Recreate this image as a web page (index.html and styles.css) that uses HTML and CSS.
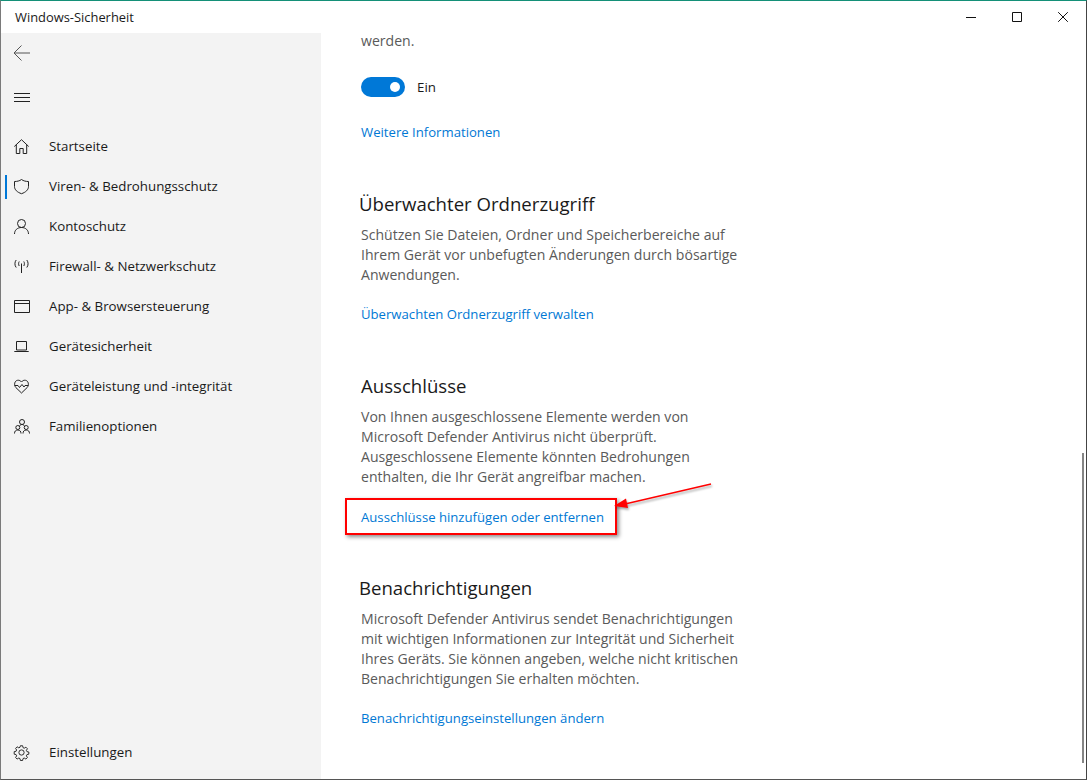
FILE: index.html
```html
<!DOCTYPE html>
<html lang="de">
<head>
<meta charset="utf-8">
<title>Windows-Sicherheit</title>
<link rel="stylesheet" href="styles.css">
</head>
<body>
<div class="window">
  <header class="titlebar">
    <span class="title">Windows-Sicherheit</span>
    <div class="controls">
      <svg class="ctl" viewBox="0 0 10 10"><path d="M0 5.500H10"/></svg>
      <svg class="ctl" viewBox="0 0 10 10"><path d="M.5.5h9v9H.5z"/></svg>
      <svg class="ctl" viewBox="0 0 10 10"><path d="M.2.2l9.600 9.600M9.800.2L.2 9.800"/></svg>
    </div>
  </header>
  <div class="main">
    <aside class="sidebar">
      <div class="tool">
        <svg class="ticon back" viewBox="0 0 18 18"><path d="M1 9h16M8.500 1.500L1 9l7.500 7.500"/></svg>
      </div>
      <div class="tool menu">
        <svg class="ticon" viewBox="0 0 18 18"><path d="M1 5.500h16M1 9.500h16M1 13.500h16"/></svg>
      </div>
      <nav class="nav">
        <a class="item">
          <svg class="icon" viewBox="0 0 15 15"><path d="M.3 7.500L7.500.7l7.200 6.800M2.300 5.800V14.500H5.800V9.500H9.200V14.500H12.700V5.800"/></svg>
          <span>Startseite</span>
        </a>
        <a class="item active">
          <svg class="icon" viewBox="0 0 15 15"><path d="M7.500.5C5.500 2 3 2.500.5 2.500V7.500c0 3.300 2.700 5.700 7 7.200 4.300-1.500 7-3.900 7-7.200V2.500C12 2.500 9.500 2 7.500.5z"/></svg>
          <span>Viren- &amp; Bedrohungsschutz</span>
        </a>
        <a class="item">
          <svg class="icon" viewBox="0 0 15 15"><circle cx="7.500" cy="4.500" r="4"/><path d="M.5 15c0-3.800 2.800-6.500 7-6.500s7 2.700 7 6.500"/></svg>
          <span>Kontoschutz</span>
        </a>
        <a class="item">
          <svg class="icon" viewBox="0 0 15 15"><path d="M7.500 4.500V14M5.200 2.500c-.8 1.300-.8 3 0 4.500M9.800 2.500c.8 1.300.8 3 0 4.500M2.200 1c-1.700 2-1.700 5.500 0 7.500M12.800 1c1.700 2 1.700 5.500 0 7.500"/></svg>
          <span>Firewall- &amp; Netzwerkschutz</span>
        </a>
        <a class="item">
          <svg class="icon icon-wide" viewBox="0 0 16 13"><path d="M.5.500h15v12H.5zM.5 3.500h15"/></svg>
          <span>App- &amp; Browsersteuerung</span>
        </a>
        <a class="item">
          <svg class="icon" viewBox="0 0 15 15"><path d="M2.500 2.500h10v8.500h-10zM.3 12.500h14.400"/></svg>
          <span>Gerätesicherheit</span>
        </a>
        <a class="item">
          <svg class="icon" viewBox="0 0 15 15"><path d="M1.800 8.500C-.3 6 .5 1.800 3.500 1.300c1.800-.3 3 .4 4 1.700 1-1.300 2.200-2 4-1.700 3 .5 3.800 4.700 1.700 7.200l-5.700 5.500zM.6 6.500h3.400l1.500 2 2.500-3 2 2.500 1-1.500h3.400"/></svg>
          <span>Geräteleistung und -integrität</span>
        </a>
        <a class="item">
          <svg class="icon icon-wide" viewBox="0 0 16 15"><circle cx="8" cy="3" r="2.500"/><circle cx="3.800" cy="8.500" r="2"/><circle cx="12.200" cy="8.500" r="2"/><path d="M.5 14.500c0-2 1-3.500 3.300-3.500S7 12.500 7 14.500M9 14.500c0-2 1-3.500 3.200-3.500s3.300 1.500 3.300 3.500M5.500 7c.5-1 1.500-1.500 2.500-1.500S10 6 10.500 7"/></svg>
          <span>Familienoptionen</span>
        </a>
      </nav>
      <a class="item settings">
        <svg class="icon" viewBox="0 0 16 16"><circle cx="8" cy="8" r="2.800"/><path d="M6.800.8h2.400l.4 2 1.300.6 1.800-1.100 1.600 1.700-1.100 1.700.6 1.400 2 .4v2.300l-2 .4-.6 1.400 1.100 1.700-1.600 1.700-1.800-1.100-1.300.6-.4 2H6.800l-.4-2-1.300-.6-1.800 1.100-1.600-1.700 1.100-1.700-.6-1.400-2-.4V7.100l2-.4.6-1.400-1.100-1.700 1.600-1.700 1.800 1.100 1.300-.6z"/></svg>
        <span>Einstellungen</span>
      </a>
    </aside>
    <main class="content">
      <p class="para first">werden.</p>
      <div class="toggle-row">
        <span class="toggle"><span class="knob"></span></span>
        <span class="toggle-label">Ein</span>
      </div>
      <a class="link link-info">Weitere Informationen</a>

      <h2 class="heading">Überwachter Ordnerzugriff</h2>
      <p class="para">Schützen Sie Dateien, Ordner und Speicherbereiche auf<br>Ihrem Gerät vor unbefugten Änderungen durch bösartige<br>Anwendungen.</p>
      <a class="link">Überwachten Ordnerzugriff verwalten</a>

      <h2 class="heading heading-excl">Ausschlüsse</h2>
      <p class="para">Von Ihnen ausgeschlossene Elemente werden von<br>Microsoft Defender Antivirus nicht überprüft.<br>Ausgeschlossene Elemente könnten Bedrohungen<br>enthalten, die Ihr Gerät angreifbar machen.</p>
      <a class="link link-excl">Ausschlüsse hinzufügen oder entfernen</a>

      <h2 class="heading heading-notify">Benachrichtigungen</h2>
      <p class="para">Microsoft Defender Antivirus sendet Benachrichtigungen<br>mit wichtigen Informationen zur Integrität und Sicherheit<br>Ihres Geräts. Sie können angeben, welche nicht kritischen<br>Benachrichtigungen Sie erhalten möchten.</p>
      <a class="link">Benachrichtigungseinstellungen ändern</a>

      <div class="scrollbar"></div>
      <div class="callout"></div>
      <svg class="arrow" viewBox="0 0 110 40" width="110" height="40"><path class="arrow-line" d="M100 1L14 21"/><path class="arrow-head" d="M3 23L15 15.500 17 25z"/></svg>
    </main>
  </div>
</div>
</body>
</html>
```
FILE: styles.css
```css
* { box-sizing: border-box; }
html, body { margin: 0; padding: 0; height: 100%; }
body {
  width: 1087px;
  height: 780px;
  overflow: hidden;
  background: #fff;
  font-family: "Open Sans", "Noto Sans", sans-serif;
  font-size: 13px;
  color: #000;
}
.window {
  width: 1087px;
  height: 780px;
  display: flex;
  flex-direction: column;
  border-top: 1px solid #149078;
  border-left: 1px solid #7a7a7a;
  border-right: 1px solid #444;
  border-bottom: 1px solid #555;
}
.titlebar {
  height: 32px;
  flex: none;
  display: flex;
  align-items: center;
  justify-content: space-between;
  background: #fff;
}
.title { margin-left: 14px; font-size: 12.900px; color: #1a1a1a; }
.controls { display: flex; gap: 36px; margin-right: 18px; }
.ctl {
  width: 10px;
  height: 10px;
  fill: none;
  stroke: #111;
  stroke-width: 1;
  display: block;
}
.main { flex: 1; display: flex; min-height: 0; }
.sidebar {
  width: 320px;
  flex: none;
  background: #f3f3f3;
  display: flex;
  flex-direction: column;
}
.tool { height: 40px; display: flex; align-items: center; padding-left: 12px; }
.menu { margin-top: 4px; }
.ticon { width: 18px; height: 18px; fill: none; stroke: #222; stroke-width: 1; }
.back { stroke: #555; }
.nav { margin-top: 9px; display: flex; flex-direction: column; flex: 1; }
.item {
  height: 40px;
  display: flex;
  align-items: center;
  position: relative;
  padding-left: 13px;
  font-size: 13.300px;
  color: #1a1a1a;
}
.item span { margin-left: 20px; }
.icon { width: 15px; height: 15px; flex: none; fill: none; stroke: #222; stroke-width: 1; overflow: visible; }
.icon-wide { width: 16px; margin-right: -1px; }
.active::before {
  content: "";
  position: absolute;
  left: 4px;
  top: 9px;
  width: 2px;
  height: 24px;
  background: #0078d7;
}
.settings { margin-bottom: 7px; }
.content {
  flex: 1;
  position: relative;
  background: #fff;
  padding-left: 40px;
}
.para {
  margin: 0;
  font-size: 14.070px;
  line-height: 20px;
  color: #5a5a5a;
  white-space: nowrap;
}
.first { line-height: 16px; }
.toggle-row { display: flex; align-items: center; margin-top: 28px; height: 20px; }
.toggle {
  width: 44px;
  height: 20px;
  border-radius: 10px;
  background: #0078d7;
  display: flex;
  align-items: center;
  justify-content: flex-end;
  padding-right: 5px;
}
.knob { width: 10px; height: 10px; border-radius: 50%; background: #fff; }
.toggle-label { margin-left: 12px; font-size: 13.300px; color: #1a1a1a; }
.link {
  display: block;
  font-size: 13.150px;
  line-height: 20px;
  color: #0078d4;
  margin-top: 19px;
  white-space: nowrap;
}
.link-info { margin-top: 25px; }
.link-excl { margin-top: 20px; }
.heading {
  margin: 48px 0 7px -2px;
  font-size: 18.600px;
  font-weight: 400;
  line-height: 28px;
  color: #1a1a1a;
  white-space: nowrap;
}
.heading-excl { margin-left: 0; }
.heading-notify { margin-top: 47px; }
.scrollbar {
  position: absolute;
  right: 2px;
  top: 420px;
  width: 2px;
  height: 310px;
  background: #858585;
}
.callout {
  position: absolute;
  left: 24px;
  top: 465px;
  width: 272px;
  height: 37px;
  border: 2px solid #f00;
  box-shadow: 2px 2px 4px rgba(0, 0, 0, .45);
}
.arrow { position: absolute; left: 290px; top: 450px; overflow: visible; filter: drop-shadow(1px 2px 1px rgba(0,0,0,.35)); }
.arrow-line { stroke: #f00; stroke-width: 1.300; fill: none; }
.arrow-head { fill: #f00; }
```
